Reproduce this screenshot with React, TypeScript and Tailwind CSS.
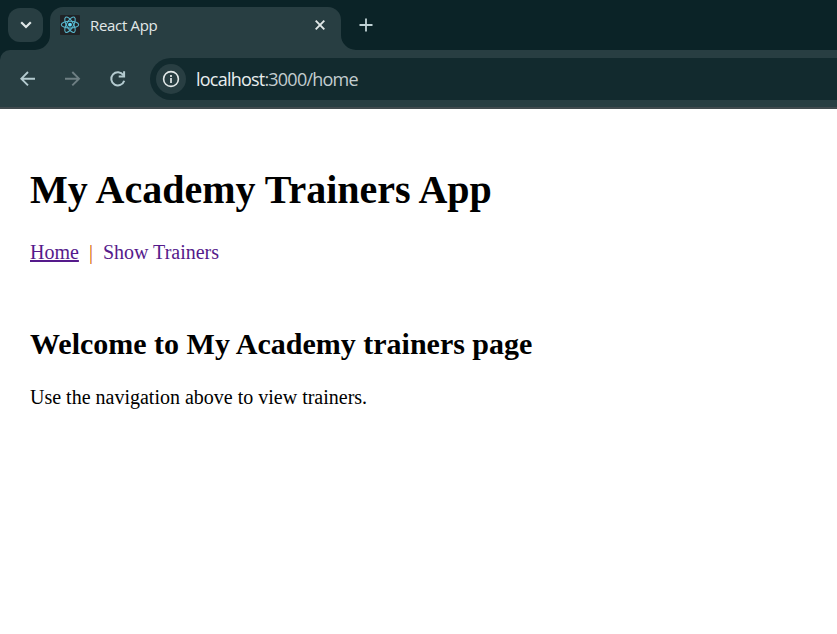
import React from "react";

function ReactLogo() {
  return (
    <svg width="20" height="20" viewBox="0 0 20 20" className="shrink-0">
      <rect width="20" height="20" rx="1" fill="#202326" />
      <g fill="none" stroke="#58b7cd" strokeWidth="1.1">
        <ellipse cx="10" cy="9.700" rx="8.700" ry="3.400" />
        <ellipse cx="10" cy="9.700" rx="8.700" ry="3.400" transform="rotate(60 10 9.700)" />
        <ellipse cx="10" cy="9.700" rx="8.700" ry="3.400" transform="rotate(120 10 9.700)" />
      </g>
      <circle cx="10" cy="9.700" r="1.900" fill="#61dafb" />
    </svg>
  );
}

function TabStrip() {
  return (
    <div className="flex h-[50px] bg-[#0b2327]">
      <button className="mt-2 ml-2 flex h-[34px] w-[35px] items-center justify-center rounded-[12px] bg-[#283e42]">
        <svg width="12" height="8" viewBox="0 0 12 8" fill="none" stroke="#e0e8e8" strokeWidth="2.200">
          <path d="M1.200 1.200 6 6l4.800-4.800" />
        </svg>
      </button>
      <div className="relative mt-[7px] ml-[7px] flex h-[43px] w-[291px] items-start rounded-t-[13px] bg-[#283e42] pt-2 pl-[10px]">
        <svg className="absolute bottom-0 -left-[15px]" width="15" height="15" viewBox="0 0 15 15">
          <path d="M15 0v15H0A15 15 0 0 0 15 0Z" fill="#283e42" />
        </svg>
        <svg className="absolute -right-[15px] bottom-0" width="15" height="15" viewBox="0 0 15 15">
          <path d="M0 0v15h15A15 15 0 0 1 0 0Z" fill="#283e42" />
        </svg>
        <ReactLogo />
        <span className="-mt-px ml-[10px] w-[225px] text-[15px] leading-[22px] tracking-[-0.32px] whitespace-nowrap text-[#e2e8e8]">
          React App
        </span>
        <svg className="mt-[5px] shrink-0" width="10" height="10" viewBox="0 0 10 10" fill="none" stroke="#e2e8e8" strokeWidth="1.900">
          <path d="m.7.7 8.600 8.600m0-8.600L.7 9.300" />
        </svg>
      </div>
      <svg className="mt-[18px] ml-[18px]" width="14" height="14" viewBox="0 0 14 14" fill="none" stroke="#c0d2d5" strokeWidth="1.800">
        <path d="M7 .5v13M.5 7h13" />
      </svg>
    </div>
  );
}

function Toolbar() {
  return (
    <div className="bg-[#0b2327]">
      <div className="flex h-[59px] rounded-tl-[10px] border-b-2 border-[#414a4e] bg-[#283e42] pt-2">
        <svg className="mt-[13px] ml-5 shrink-0" width="16" height="16" viewBox="0 0 16 16" fill="none" stroke="#b4cbd0" strokeWidth="1.900">
          <path d="M15 7.700H1.500M8 1 1.300 7.700 8 14.400" />
        </svg>
        <svg className="mt-[13px] ml-[29px] shrink-0" width="16" height="16" viewBox="0 0 16 16" fill="none" stroke="#6e7f83" strokeWidth="1.900">
          <path d="M0 7.700h13.700M7.300 1 14 7.700l-6.700 6.700" />
        </svg>
        <svg className="mt-3 ml-[28px] shrink-0" width="18" height="18" viewBox="0 0 18 18" fill="none" stroke="#b4cbd0" strokeWidth="2">
          <path d="M14.300 5A6.600 6.600 0 1 0 15.200 10.700M15.100 1.200v5.400H9.700" />
        </svg>
        <div className="ml-[23px] flex h-[42px] flex-1 items-center rounded-l-full bg-[#122a2e] pl-[6px]">
          <span className="flex size-[30px] items-center justify-center rounded-full bg-[#283e42]">
            <svg width="18" height="18" viewBox="0 0 18 18" fill="none" stroke="#e2e8e8">
              <circle cx="9" cy="9" r="7.400" strokeWidth="1.600" />
              <path d="M9 8v5M9 5v2" strokeWidth="1.700" />
            </svg>
          </span>
          <span className="ml-[10px] text-[18px] leading-6 tracking-[-0.78px] text-[#c2cdcf]">
            <span className="text-[#e8eeee]">localhost</span>:3000/home
          </span>
        </div>
      </div>
    </div>
  );
}

export default function App() {
  return (
    <div className="h-[634px] w-[837px] overflow-hidden bg-white">
      <header className="font-['Open_Sans','Noto_Sans',sans-serif]">
        <TabStrip />
        <Toolbar />
      </header>
      <main className="px-[30px] pt-[58px] font-['Liberation_Serif','Times_New_Roman',serif] text-[20px] leading-[23px] text-black">
        <h1 className="text-[40px] leading-[46px] font-bold">My Academy Trainers App</h1>
        <nav className="mt-[28px] flex text-[#551a8b]">
          <a href="#home" className="underline decoration-2 underline-offset-1">Home</a>
          <span className="mx-[10px] text-[#d36000]">|</span>
          <a href="#trainers">Show Trainers</a>
        </nav>
        <h2 className="mt-[63px] text-[30px] leading-[34px] font-bold">Welcome to My Academy trainers page</h2>
        <p className="mt-[25px]">Use the navigation above to view trainers.</p>
      </main>
    </div>
  );
}
